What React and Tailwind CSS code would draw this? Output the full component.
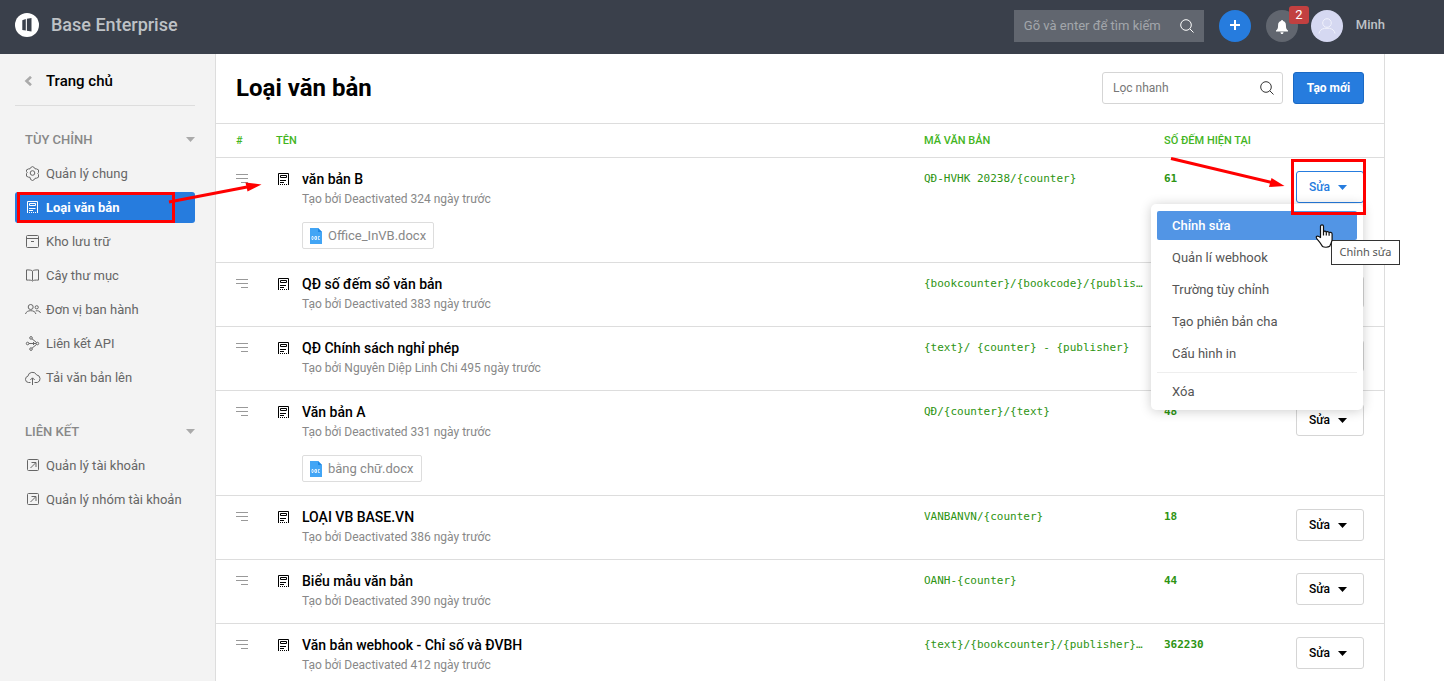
import React from "react";

const icons = {
  gear: (
    <>
      <path d="M5.6 1.6 7.5.6l1.9 1 .6 1.2 1.5.1 2 1v2.6l-.7 1 .7 1v2.7l-2 1-1.5.1-.6 1.2-1.9 1-1.9-1L5 11.3l-1.500-.1-2-1V7.500l.7-1-.7-1V3.900l2-1L5 2.800z" />
      <circle cx="7.500" cy="7" r="2.300" />
    </>
  ),
  doc: (
    <>
      <path d="M2.500 13V1.500h10V13" />
      <path d="M4.500 3.500h6v2h-6zM4 8.500h6.500M4 10.500h4" />
      <path d="M4 12.500h8" strokeDasharray="1 1" />
    </>
  ),
  archive: (
    <>
      <rect x="1.500" y="1.500" width="12" height="12" rx="1" />
      <path d="M1.500 4.500h12M6 7.500h3" />
    </>
  ),
  book: (
    <path d="M7.500 12.500V3.200C6.800 2.200 5.500 1.900 1.500 1.900v10.200c3 0 5-.2 6 1 1-1.200 3-1 6-1V1.900c-4 0-5.300.3-6 1.300" />
  ),
  people: (
    <>
      <circle cx="5.700" cy="5" r="2.500" />
      <circle cx="11.700" cy="5.300" r="1.600" />
      <path d="M.5 12c.6-2.300 2.600-3.300 5.200-3.300s4.600 1 5.200 3.300M10.700 8.900c2.500-.5 4.300.3 4.800 2.100" />
    </>
  ),
  api: (
    <>
      <circle cx="6" cy="1.900" r="1.300" />
      <circle cx="2.600" cy="7.500" r="1.300" />
      <circle cx="12.400" cy="7.500" r="1.300" />
      <circle cx="6" cy="13.100" r="1.300" />
      <path d="M3.900 7.500h7.200M7 2.800l4.500 3.700M7 12.200l4.500-3.700M8.500 6v3" />
    </>
  ),
  upload: (
    <>
      <path d="M5.500 12.500H3.500A3.200 3.200 0 0 1 2.900 6.200 4.600 4.600 0 0 1 11.600 4.900a3.900 3.900 0 0 1 .7 7.600H9.500" />
      <path d="M7.500 15V8M5.300 10l2.200-2.200L9.700 10" />
    </>
  ),
  external: (
    <>
      <rect x="2.500" y="1.500" width="11" height="11" rx="1" />
      <path d="M5.500 10l5-5M6.500 4.500h4.500v4.500" />
    </>
  ),
};

function NavIcon({ name }) {
  return (
    <svg className="h-[15px] w-4 shrink-0 overflow-visible" viewBox="0 0 16 15" fill="none" stroke="currentColor" strokeWidth="1" aria-hidden="true">
      {icons[name]}
    </svg>
  );
}

function SearchIcon({ className }) {
  return (
    <svg className={className} viewBox="0 0 14 14" fill="none" stroke="currentColor" strokeWidth="1" aria-hidden="true">
      <circle cx="6" cy="6" r="5.300" />
      <path d="M9.800 9.800 13.500 13.500" />
    </svg>
  );
}

function Caret({ className }) {
  return (
    <svg className={className} viewBox="0 0 9 5" fill="currentColor" aria-hidden="true">
      <path d="M0 0h9L4.500 5z" />
    </svg>
  );
}

function TopBar() {
  return (
    <header className="flex h-[54px] shrink-0 items-start bg-[#3a404b] pl-[15px] pr-[59px]">
      <a href="#" className="flex h-[50px] items-center gap-3">
        <svg className="h-6 w-6" viewBox="0 0 24 24" aria-hidden="true">
          <circle cx="12" cy="12" r="12" fill="#fff" />
          <path d="M7.300 7.200 10.800 6V17.600L7.300 16.900zM11.900 5.700 16.500 5v13.500l-4.600-.7z" fill="#3a404b" />
        </svg>
        <span className="text-lg font-medium text-[#bec2c6]">Base Enterprise</span>
      </a>
      <div className="ml-auto flex h-[52px] items-center">
        <label className="flex h-8 w-[190px] items-center bg-[#61666f] px-[10px]">
          <input type="text" aria-label="Tìm kiếm" placeholder="Gõ và enter để tìm kiếm" className="w-full min-w-0 flex-1 bg-transparent text-[13px] outline-none placeholder:text-[#a3a6ab]" />
          <SearchIcon className="h-[14px] w-[14px] shrink-0 text-white" />
        </label>
        <button aria-label="Thêm" className="ml-[15px] flex h-8 w-8 items-center justify-center rounded-full bg-[#267cde] pb-0.5 text-white">
          <svg className="h-[10px] w-[10px]" viewBox="0 0 10 10" fill="none" stroke="currentColor" strokeWidth="2" aria-hidden="true">
            <path d="M5 0v10M0 5h10" />
          </svg>
        </button>
        <button aria-label="Thông báo" className="relative ml-[15px] flex h-8 w-8 items-center justify-center rounded-full bg-[#61666f] text-white">
          <svg className="mt-0.5 h-[14px] w-3" viewBox="0 0 12 14" fill="currentColor" aria-hidden="true">
            <path d="M6 0c.6 0 1 .4 1 .9 1.900.5 2.900 2 2.900 4 0 3.300.7 4.600 2.100 5.600v1H0v-1c1.400-1 2.100-2.300 2.100-5.600 0-2 1-3.500 2.900-4C5 .4 5.400 0 6 0zM4.500 12.200h3C7.500 13.200 6.900 14 6 14s-1.500-.8-1.500-1.800z" />
          </svg>
          <span className="absolute -top-1 left-[23px] flex h-[18px] w-5 items-center justify-center rounded-[3px] bg-[#c24040] text-[13px]">2</span>
        </button>
        <a href="#" className="ml-[13px] flex items-center gap-[13px]">
          <span className="flex h-8 w-8 items-center justify-center rounded-full bg-[#d5d8f1]">
            <svg className="h-4 w-[18px]" viewBox="0 0 18 16" fill="none" stroke="#f1f2fc" strokeWidth="1" aria-hidden="true">
              <circle cx="9" cy="5" r="4.300" />
              <path d="M1 15.500c.5-3 2.500-4.500 5.500-5.200h5c3 .7 5 2.200 5.500 5.200" />
            </svg>
          </span>
          <span className="pb-0.5 text-[13px] font-medium text-[#bec2c6]">Minh</span>
        </a>
      </div>
    </header>
  );
}

function NavItem({ icon, children, active }) {
  return (
    <a
      href="#"
      className={
        "relative flex h-[31px] items-center gap-[5px] rounded-[3px] pl-[10px] text-[13px] " +
        (active ? "bg-[#267cde] font-bold text-white" : "text-[#666]")
      }
    >
      <NavIcon name={icon} />
      {children}
      {active && (
        <>
          <span className="pointer-events-none absolute inset-y-0 left-[2px] right-5 border-[3px] border-[#ff0000]" />
          <svg className="pointer-events-none absolute -top-[12px] left-[150px] h-[30px] w-[98px]" viewBox="0 0 98 30" fill="#ff0000" aria-hidden="true">
            <path d="M4 22 82 7" stroke="#ff0000" strokeWidth="3" />
            <path d="M80.500 2.500 96.500 4.500 82.500 11.500z" />
          </svg>
        </>
      )}
    </a>
  );
}

function NavGroup({ title, children }) {
  return (
    <nav className="flex flex-col gap-[3px]" aria-label={title}>
      <h2 className="flex h-[31px] items-center justify-between pl-[10px] text-[13px] font-medium text-[#888]">
        {title}
        <Caret className="h-[5px] w-[9px] text-[#aaa]" />
      </h2>
      {children}
    </nav>
  );
}

function Sidebar() {
  return (
    <aside className="relative z-10 w-[216px] shrink-0 border-r border-[#ddd] bg-[#f3f3f3] pl-[15px] pr-5">
      <a href="#" className="flex h-[52px] items-center gap-[13px] border-b border-[#ddd] pl-[9px] pt-[3px] text-[15px] font-medium text-black">
        <svg className="h-[10px] w-[9px]" viewBox="0 0 9 10" fill="none" stroke="#aaa" strokeWidth="2.600" aria-hidden="true">
          <path d="M7 .8 2.500 5 7 9.200" />
        </svg>
        Trang chủ
      </a>
      <div className="flex flex-col gap-[23px] pt-[18px]">
        <NavGroup title="TÙY CHỈNH">
          <NavItem icon="gear">Quản lý chung</NavItem>
          <NavItem icon="doc" active>Loại văn bản</NavItem>
          <NavItem icon="archive">Kho lưu trữ</NavItem>
          <NavItem icon="book">Cây thư mục</NavItem>
          <NavItem icon="people">Đơn vị ban hành</NavItem>
          <NavItem icon="api">Liên kết API</NavItem>
          <NavItem icon="upload">Tải văn bản lên</NavItem>
        </NavGroup>
        <NavGroup title="LIÊN KẾT">
          <NavItem icon="external">Quản lý tài khoản</NavItem>
          <NavItem icon="external">Quản lý nhóm tài khoản</NavItem>
        </NavGroup>
      </div>
    </aside>
  );
}

const rows = [
  { name: "văn bản B", by: "Tạo bởi Deactivated 324 ngày trước", code: "QĐ-HVHK 20238/{counter}", count: "61", file: "Office_InVB.docx", open: true },
  { name: "QĐ số đếm sổ văn bản", by: "Tạo bởi Deactivated 383 ngày trước", code: "{bookcounter}/{bookcode}/{publisher}" },
  { name: "QĐ Chính sách nghỉ phép", by: "Tạo bởi Nguyên Diệp Linh Chi 495 ngày trước", code: "{text}/ {counter} - {publisher}" },
  { name: "Văn bản A", by: "Tạo bởi Deactivated 331 ngày trước", code: "QĐ/{counter}/{text}", count: "48", file: "bằng chữ.docx" },
  { name: "LOẠI VB BASE.VN", by: "Tạo bởi Deactivated 386 ngày trước", code: "VANBANVN/{counter}", count: "18" },
  { name: "Biểu mẫu văn bản", by: "Tạo bởi Deactivated 390 ngày trước", code: "OANH-{counter}", count: "44" },
  { name: "Văn bản webhook - Chỉ số và ĐVBH", by: "Tạo bởi Deactivated 412 ngày trước", code: "{text}/{bookcounter}/{publisher}/{text}", count: "362230" },
];

const menuItems = ["Quản lí webhook", "Trường tùy chỉnh", "Tạo phiên bản cha", "Cấu hình in"];

function ActionMenu() {
  return (
    <div className="absolute right-[1px] top-[33px] z-20 w-[212px] rounded-[5px] bg-white px-[6px] pb-[2px] pt-[7px] text-[13px] text-[#555] shadow-[0_1px_12px_rgba(0,0,0,0.2)]">
      <button className="relative flex h-[29px] w-[200px] items-center rounded-[2px] bg-[#5295e5] px-[15px] font-medium text-white">
        Chỉnh sửa
        <svg className="absolute left-[158px] top-[13px] z-10 h-6 w-[18px]" viewBox="0 0 18 24" fill="#fff" stroke="#111" strokeWidth="1.200" strokeLinejoin="round" aria-hidden="true">
          <path d="M5.500 13.500V2.300C5.500.4 8.500.4 8.500 2.300V8c.3-1.400 2.800-1.200 2.800.4.4-1.300 2.800-1.100 2.800.6.5-1.100 3-.8 3 1v5.500c0 2-.9 3-1.400 4.500l-1 2.300c-1.800 1.200-5.500 1.200-7.200.2-1.300-2-2.700-4.300-4.500-6.300-1.300-1.500-2.400-2.700-1.500-3.700 1-1.100 2.800.1 4 1z" />
          <path d="M8.500 8v3.500M11.300 8.500v3M14.100 9.200v2.600" fill="none" />
        </svg>
        <span role="tooltip" className="absolute left-[174px] top-[29px] flex h-[25px] w-[69px] items-center justify-center whitespace-nowrap border border-[#333] bg-white font-['Noto_Sans',sans-serif] text-[11px] font-normal text-[#555]">
          Chỉnh sửa
        </span>
      </button>
      <div className="mb-[3px] flex flex-col border-b border-[#eee] pb-[2px] pt-[2px]">
        {menuItems.map((item) => (
          <button key={item} className="flex h-8 items-center px-[15px]">{item}</button>
        ))}
      </div>
      <button className="flex h-8 w-full items-center px-[15px]">Xóa</button>
    </div>
  );
}

function Row({ row }) {
  return (
    <tr className="align-top">
      <td className="border-b border-[#ddd] pl-5 pt-4">
        <svg className="h-[10px] w-3" viewBox="0 0 12 10" stroke="#999" role="img" aria-label="Sắp xếp">
          <path d="M0 .5h12M0 4.500h12M5 8.500h7" />
        </svg>
      </td>
      <td className="border-b border-[#ddd] pb-3 pt-[11px]">
        <div className="flex">
          <svg className="ml-[2px] mr-[13px] mt-1 h-3 w-[11px]" viewBox="0 0 11 12" fill="none" stroke="#000" aria-hidden="true">
            <path d="M.5 12V.5h10V12M2.500 2.500h6v2h-6zM2 7.500h6M2 9.500h4" />
            <path d="M2 11.500h8" strokeDasharray="1 1" />
          </svg>
          <div>
            <a href="#" className="block text-sm/5 font-medium text-black">{row.name}</a>
            <p className="text-xs/5 text-[#888]">{row.by}</p>
            {row.file && (
              <a href="#" className="mb-px mt-[13px] inline-flex h-[27px] items-center gap-[6px] rounded-[2px] border border-[#ddd] px-[7px] align-top text-[13px] text-[#888]">
                <svg className="h-4 w-3" viewBox="0 0 12 16" aria-hidden="true">
                  <path d="M0 0h8l4 4v12H0z" fill="#42a5f5" />
                  <path d="M8 0l4 4H8z" fill="#1e88e5" />
                  <path d="M2 8.500v3M2 8.500h1l.8.8v1.400L3 11.500H2M5 8.500h1.500v3H5zM9.800 8.500H8.300v3h1.500" fill="none" stroke="#fff" strokeWidth=".8" />
                </svg>
                {row.file}
              </a>
            )}
          </div>
        </div>
      </td>
      <td className="truncate border-b border-[#ddd] pr-5 pt-[11px] font-['DejaVu_Sans_Mono',monospace] text-[11px]/[20px] text-[#2d9412]">{row.code}</td>
      <td className="border-b border-[#ddd] pt-[11px] font-['DejaVu_Sans_Mono',monospace] text-[11px]/[20px] font-bold text-[#2d9412]">{row.count}</td>
      <td className="border-b border-[#ddd] pr-5 pt-[13px]">
        <div className="relative">
          <button
            className={
              "flex h-8 w-[68px] items-center justify-between rounded-[3px] border bg-white pl-3 pr-4 text-xs font-medium " +
              (row.open ? "border-[#267cde] text-[#267cde]" : "border-[#d5d5d5] text-black")
            }
          >
            Sửa
            <Caret className="h-[5px] w-[9px]" />
          </button>
          {row.open && (
            <>
              <ActionMenu />
              <span className="pointer-events-none absolute -left-[5px] -top-3 z-30 h-14 w-[75px] border-[3px] border-[#ff0000]" />
              <svg className="pointer-events-none absolute -left-[128px] -top-4 z-30 h-9 w-[120px]" viewBox="0 0 120 36" fill="#ff0000" aria-hidden="true">
                <path d="M3 3.500 104 27.500" stroke="#ff0000" strokeWidth="3" />
                <path d="M103.500 23 116.500 31 101 32z" />
              </svg>
            </>
          )}
        </div>
      </td>
    </tr>
  );
}

export default function App() {
  const th = "border-b border-[#ddd] pt-0.5 text-left text-[11px] font-medium text-[#43b51e]";
  return (
    <div className="flex h-screen flex-col overflow-hidden bg-white font-[Roboto,sans-serif]">
      <TopBar />
      <div className="flex min-h-0 flex-1">
        <Sidebar />
        <main className="mr-[59px] min-w-0 flex-1 border-r border-[#ddd]">
          <div className="flex h-[70px] items-center border-b border-[#ddd] px-5 pb-0.5">
            <h1 className="text-2xl font-bold text-black">Loại văn bản</h1>
            <label className="ml-auto flex h-8 w-[181px] items-center rounded-[3px] border border-[#d5d5d5] px-2 pl-[10px]">
              <input type="text" aria-label="Lọc nhanh" placeholder="Lọc nhanh" className="w-full min-w-0 flex-1 bg-transparent text-xs outline-none placeholder:text-[#777]" />
              <SearchIcon className="h-[14px] w-[14px] shrink-0 text-[#333]" />
            </label>
            <button className="ml-[10px] h-8 w-[71px] rounded-[3px] border border-[#1a69c4] bg-[#267cde] text-xs font-bold text-white">Tạo mới</button>
          </div>
          <table className="w-full table-fixed border-separate border-spacing-0">
            <thead>
              <tr className="h-[34px]">
                <th className={th + " w-[60px] pl-5"}>#</th>
                <th className={th}>TÊN</th>
                <th className={th + " w-60"}>MÃ VĂN BẢN</th>
                <th className={th + " w-[132px]"}>SỐ ĐẾM HIỆN TẠI</th>
                <th className={th + " w-[88px]"}></th>
              </tr>
            </thead>
            <tbody>
              {rows.map((row) => (
                <Row key={row.name} row={row} />
              ))}
            </tbody>
          </table>
        </main>
      </div>
    </div>
  );
}
